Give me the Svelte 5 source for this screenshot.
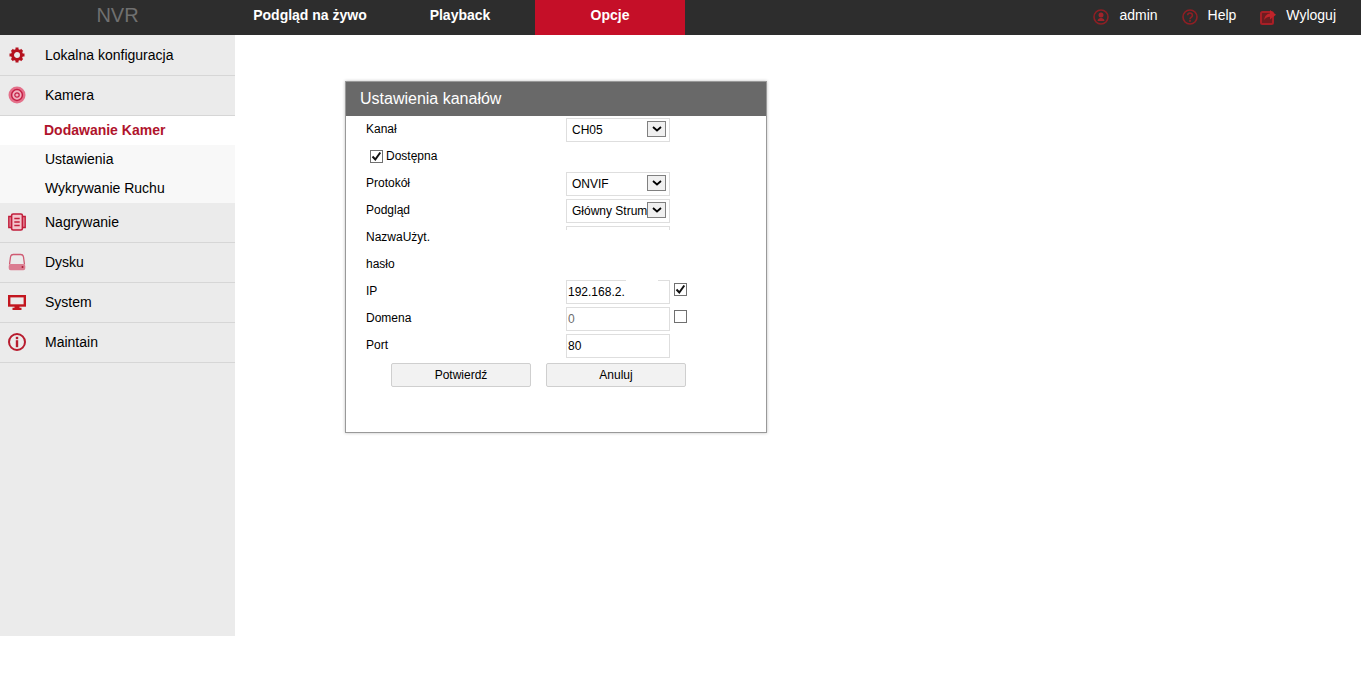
<script>
  const menu = [
    { id: 'local', label: 'Lokalna konfiguracja' },
    { id: 'camera', label: 'Kamera', sub: ['Dodawanie Kamer', 'Ustawienia', 'Wykrywanie Ruchu'] },
    { id: 'record', label: 'Nagrywanie' },
    { id: 'disk', label: 'Dysku' },
    { id: 'system', label: 'System' },
    { id: 'maintain', label: 'Maintain' }
  ];
  const tabs = ['Podgląd na żywo', 'Playback', 'Opcje'];

  let channel = 'CH05';
  let protocol = 'ONVIF';
  let stream = 'Główny Strumień';
  let enabled = true;
  let useIp = true;
  let useDomain = false;
</script>

<header class="topbar">
  <div class="logo">NVR</div>
  <nav class="tabs">
    {#each tabs as tab, i}
      <a href="#top" class="tab" class:active={i === 2}>{tab}</a>
    {/each}
  </nav>
  <div class="user">
    <span class="user-item">
      <svg viewBox="0 0 18 18" width="18" height="18" fill="none">
        <circle cx="9" cy="9" r="7" stroke="#8e1f24" stroke-width="1.6" />
        <circle cx="9" cy="7" r="2.500" fill="#a0242a" />
        <path d="M5.500 13c.3-2.300 1.800-3 3.500-3s3.200.7 3.500 3z" fill="#a0242a" />
      </svg>
      admin
    </span>
    <span class="user-item">
      <svg viewBox="0 0 18 18" width="18" height="18" fill="none">
        <circle cx="9" cy="9" r="7" stroke="#8e1f24" stroke-width="1.6" />
        <path d="M6.600 7.200a2.400 2.300 0 1 1 3.700 2c-.9.600-1.300 1-1.300 2" stroke="#8e1f24" stroke-width="1.600" />
        <rect x="8.100" y="12" width="1.800" height="1.800" fill="#8e1f24" />
      </svg>
      Help
    </span>
    <span class="user-item">
      <svg viewBox="0 0 18 18" width="18" height="18" fill="none">
        <rect x="2" y="4" width="12" height="12" rx="1.500" fill="#6e1c20" stroke="#a81f26" stroke-width="2" />
        <path d="M11 2l6 4.800-6 4.700V8.800c-2.500 0-4.300.8-5.800 3.200.3-3.900 2.500-6.200 5.800-6.500z" fill="#c0242a" />
      </svg>
      Wyloguj
    </span>
  </div>
</header>

<div class="page">
  <aside class="sidebar">
    {#each menu as item}
      <div class="menu-item">
        <span class="menu-icon">
          {#if item.id === 'local'}
            <svg viewBox="0 0 18 18" width="18" height="18" fill="none">
              <circle cx="9" cy="9" r="4.500" stroke="#b5121f" stroke-width="3" />
              <path d="M7.500 1.500h3v3h-3zM7.500 13.500h3v3h-3zM1.500 7.500h3v3h-3zM13.500 7.500h3v3h-3zM2.800 4.900l2.100-2.100 2.100 2.100-2.100 2.100zM11 4.900l2.100-2.100 2.100 2.100-2.100 2.100zM2.800 13.100l2.100-2.100 2.100 2.100-2.100 2.100zM11 13.100l2.100-2.100 2.100 2.100-2.100 2.100z" fill="#b5121f" />
            </svg>
          {:else if item.id === 'camera'}
            <svg viewBox="0 0 18 18" width="18" height="18" fill="none">
              <circle cx="9" cy="9" r="8.500" fill="#e4708a" />
              <circle cx="9" cy="9" r="5.400" stroke="#c41f45" stroke-width="1.500" fill="#f1b3c0" />
              <circle cx="9" cy="9" r="2.200" stroke="#c41f45" stroke-width="1.200" />
            </svg>
          {:else if item.id === 'record'}
            <svg viewBox="0 0 18 18" width="18" height="18" fill="none">
              <path d="M3.500 3.500H.8v11h2.700M14.500 3.500h2.700v11h-2.700" fill="#e58a9b" stroke="#c11d3a" stroke-width="1.400" />
              <rect x="3.600" y="1" width="10.800" height="16" rx="1.500" fill="#f3c5cd" stroke="#c11d3a" stroke-width="1.600" />
              <path d="M6.300 5.500h5.400M6.300 9h5.400M6.300 12.500h5.400" stroke="#c11d3a" stroke-width="1.500" />
            </svg>
          {:else if item.id === 'disk'}
            <svg viewBox="0 0 18 18" width="18" height="18" fill="none">
              <path d="M1.500 11.500l1-7.500a2.800 2.800 0 0 1 2.800-2.500h7.400a2.800 2.800 0 0 1 2.800 2.500l1 7.500" stroke="#cf5a72" stroke-width="1.300" />
              <path d="M.7 13a2 2 0 0 1 2-2h12.600a2 2 0 0 1 2 2v2.200a2 2 0 0 1-2 2H2.700a2 2 0 0 1-2-2z" fill="#db7d91" />
              <circle cx="14.500" cy="14" r="1" fill="#a81c35" />
            </svg>
          {:else if item.id === 'system'}
            <svg viewBox="0 0 18 15" width="18" height="15" fill="none">
              <rect x="1.200" y="1.200" width="15.600" height="9.300" stroke="#c3161f" stroke-width="2.400" />
              <path d="M6.500 11h5v1.800h2V15h-9v-2.200h2z" fill="#c3161f" />
            </svg>
          {:else}
            <svg viewBox="0 0 18 18" width="18" height="18" fill="none">
              <circle cx="9" cy="9" r="8" stroke="#b81c2e" stroke-width="2" />
              <rect x="7.800" y="3.800" width="2.400" height="2.400" fill="#b81c2e" />
              <rect x="7.800" y="7.200" width="2.400" height="7" fill="#b81c2e" />
            </svg>
          {/if}
        </span>
        {item.label}
      </div>
      {#if item.sub}
        <div class="submenu">
          {#each item.sub as entry, i}
            <div class="sub-item" class:current={i === 0}>{entry}</div>
          {/each}
        </div>
      {/if}
    {/each}
  </aside>

  <main class="content">
    <section class="dialog">
      <h2>Ustawienia kanałów</h2>
      <form class="rows" on:submit|preventDefault>
        <span class="label">Kanał</span>
        <div class="select">
          <select bind:value={channel}>
            <option>CH05</option>
          </select>
          <span class="arrow"><svg viewBox="0 0 10 6" width="10" height="6"><path d="M1 1l4 3.500L9 1" fill="none" stroke="#000" stroke-width="1.800" /></svg></span>
        </div>
        <span></span>

        <label class="enable">
          <input class="check" type="checkbox" bind:checked={enabled} />
          <span class="box" class:on={enabled}>
            <svg viewBox="0 0 13 13" width="13" height="13"><path d="M2.500 6.500l2.800 3 5-7" fill="none" stroke="#111" stroke-width="2" /></svg>
          </span>
          Dostępna
        </label>

        <span class="label">Protokół</span>
        <div class="select">
          <select bind:value={protocol}>
            <option>ONVIF</option>
          </select>
          <span class="arrow"><svg viewBox="0 0 10 6" width="10" height="6"><path d="M1 1l4 3.500L9 1" fill="none" stroke="#000" stroke-width="1.800" /></svg></span>
        </div>
        <span></span>

        <span class="label">Podgląd</span>
        <div class="select">
          <select bind:value={stream}>
            <option>Główny Strumień</option>
          </select>
          <span class="arrow"><svg viewBox="0 0 10 6" width="10" height="6"><path d="M1 1l4 3.500L9 1" fill="none" stroke="#000" stroke-width="1.800" /></svg></span>
        </div>
        <span></span>

        <span class="label">NazwaUżyt.</span>
        <div class="cut-field"></div>
        <span></span>

        <span class="label">hasło</span>
        <span></span>
        <span></span>

        <span class="label">IP</span>
        <div class="field">
          <input type="text" value="192.168.2." />
          <span class="gap"></span>
        </div>
        <label class="side-check">
          <input class="check" type="checkbox" bind:checked={useIp} />
          <span class="box" class:on={useIp}>
            <svg viewBox="0 0 13 13" width="13" height="13"><path d="M2.500 6.500l2.800 3 5-7" fill="none" stroke="#111" stroke-width="2" /></svg>
          </span>
        </label>

        <span class="label">Domena</span>
        <div class="field">
          <input class="muted" type="text" value="0" />
        </div>
        <label class="side-check">
          <input class="check" type="checkbox" bind:checked={useDomain} />
          <span class="box" class:on={useDomain}>
            <svg viewBox="0 0 13 13" width="13" height="13"><path d="M2.500 6.500l2.800 3 5-7" fill="none" stroke="#111" stroke-width="2" /></svg>
          </span>
        </label>

        <span class="label">Port</span>
        <div class="field">
          <input type="text" value="80" />
        </div>
        <span></span>

        <div class="actions">
          <button type="submit">Potwierdź</button>
          <button type="button">Anuluj</button>
        </div>
      </form>
    </section>
  </main>
</div>

<style>
  :global(body) {
    margin: 0;
    background: #fff;
    font-family: "Liberation Sans", Arial, sans-serif;
    color: #000;
  }

  .topbar {
    display: flex;
    height: 35px;
    background: #2d2d2d;
    color: #fff;
  }

  .logo {
    width: 235px;
    text-align: center;
    font-size: 20px;
    line-height: 31px;
    color: #707070;
  }

  .tabs {
    display: flex;
  }

  .tab {
    width: 150px;
    text-align: center;
    font-size: 14px;
    font-weight: bold;
    line-height: 31px;
    color: #fff;
    text-decoration: none;
  }

  .tab.active {
    background: #c50f28;
  }

  .user {
    display: flex;
    margin-left: auto;
    padding-right: 25px;
    gap: 23px;
    font-size: 14px;
    line-height: 31px;
  }

  .user-item {
    display: flex;
    align-items: center;
    gap: 9px;
    height: 31px;
  }

  .user-item svg {
    margin-top: 2px;
  }

  .page {
    display: flex;
  }

  .sidebar {
    flex: none;
    width: 235px;
    height: 601px;
    background: #ebebeb;
    font-size: 14px;
  }

  .menu-item {
    display: flex;
    align-items: center;
    height: 38px;
    padding-bottom: 1px;
    border-bottom: 1px solid #d6d6d6;
  }

  .menu-item:first-child {
    height: 39px;
  }

  .menu-icon {
    display: flex;
    justify-content: center;
    width: 34px;
    margin-right: 11px;
  }

  .submenu {
    background: #f8f8f8;
  }

  .sub-item {
    height: 29px;
    padding-left: 45px;
    line-height: 28px;
  }

  .sub-item.current {
    padding-left: 44px;
    background: #fff;
    font-weight: bold;
    color: #b0142c;
  }

  .content {
    flex: 1;
    padding: 46px 0 0 110px;
  }

  .dialog {
    box-sizing: border-box;
    width: 422px;
    height: 352px;
    border: 1px solid #999;
    box-shadow: 0 0 3px rgba(0, 0, 0, 0.25);
  }

  h2 {
    margin: 0;
    height: 34px;
    padding-left: 14px;
    background: #696969;
    color: #fff;
    font-size: 16px;
    font-weight: normal;
    line-height: 34px;
  }

  .rows {
    display: grid;
    grid-template-columns: 200px 104px 1fr;
    grid-auto-rows: 27px;
    padding-left: 20px;
    font-size: 12px;
  }

  .label {
    line-height: 26px;
  }

  .select,
  .field {
    position: relative;
    box-sizing: border-box;
    height: 24px;
    margin-top: 2px;
    border: 1px solid #dedede;
  }

  select {
    display: block;
    box-sizing: border-box;
    width: 100%;
    height: 22px;
    padding: 0 22px 0 5px;
    border: none;
    background: #fff;
    font: 12px "Liberation Sans", Arial, sans-serif;
    color: #000;
    appearance: none;
    outline: none;
  }

  .arrow {
    position: absolute;
    top: 2px;
    right: 3px;
    display: flex;
    align-items: center;
    justify-content: center;
    box-sizing: border-box;
    width: 19px;
    height: 16px;
    border: 1px solid #808080;
    background: #f0f0f0;
    pointer-events: none;
  }

  .cut-field {
    box-sizing: border-box;
    height: 4px;
    margin-top: 2px;
    border: 1px solid #dedede;
    border-bottom: none;
  }

  .field input {
    display: block;
    box-sizing: border-box;
    width: 100%;
    height: 22px;
    padding: 0 0 1px 1px;
    border: none;
    background: #fff;
    font: 12px "Liberation Sans", Arial, sans-serif;
    color: #000;
    outline: none;
  }

  .field input.muted {
    color: #6d6d6d;
  }

  .gap {
    position: absolute;
    top: -1px;
    left: 59px;
    width: 32px;
    height: 2px;
    background: #fff;
  }

  .enable {
    grid-column: 1 / -1;
    display: flex;
    align-items: center;
    gap: 3px;
    height: 26px;
    padding-left: 4px;
  }

  .side-check {
    display: block;
    padding: 5px 0 0 4px;
  }

  .check {
    position: absolute;
    opacity: 0;
    width: 0;
    height: 0;
    margin: 0;
  }

  .box {
    display: block;
    box-sizing: border-box;
    width: 13px;
    height: 13px;
    border: 1px solid #707070;
    background: #fff;
  }

  .box svg {
    display: none;
    margin: -1px;
  }

  .box.on svg {
    display: block;
  }

  .actions {
    grid-column: 1 / -1;
    display: flex;
    gap: 15px;
    padding: 4px 0 0 25px;
  }

  button {
    box-sizing: border-box;
    width: 140px;
    height: 24px;
    padding: 0;
    border: 1px solid #cfcfcf;
    border-radius: 2px;
    background: #f2f2f2;
    font: 12px "Liberation Sans", Arial, sans-serif;
    color: #000;
  }
</style>
